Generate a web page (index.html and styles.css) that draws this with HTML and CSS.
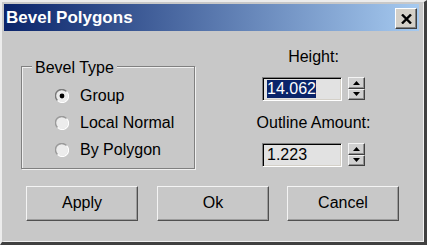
FILE: index.html
```html
<!DOCTYPE html>
<html>
<head>
<meta charset="utf-8">
<link rel="stylesheet" href="styles.css">
</head>
<body>
<div class="window">
  <div class="frame">
    <div class="titlebar">
      <span class="title">Bevel Polygons</span>
      <button class="close" type="button">
        <svg width="11" height="10" viewBox="0 0 11 10"><path d="M1 0.5 L10 9.5 M10 0.5 L1 9.5" stroke="#000" stroke-width="2.4" fill="none"/></svg>
      </button>
    </div>
    <div class="client">
      <div class="top">
        <div class="group">
          <span class="legend">Bevel Type</span>
          <div class="radio-row">
            <svg class="radio" width="14" height="14" viewBox="0 0 14 14">
              <circle cx="7" cy="7" r="6" fill="#ececec"/>
              <path d="M2.3 11.2 A6 6 0 0 1 11.2 2.3" stroke="#7a7a7a" stroke-width="1.4" fill="none"/>
              <path d="M11.7 2.8 A6 6 0 0 1 2.8 11.7" stroke="#ffffff" stroke-width="1.2" fill="none"/>
              <circle cx="7" cy="7" r="2.4" fill="#000"/>
            </svg>
            <span>Group</span>
          </div>
          <div class="radio-row">
            <svg class="radio" width="14" height="14" viewBox="0 0 14 14">
              <circle cx="7" cy="7" r="6" fill="#ececec"/>
              <path d="M2.3 11.2 A6 6 0 0 1 11.2 2.3" stroke="#9a9a9a" stroke-width="1.4" fill="none"/>
              <path d="M11.7 2.8 A6 6 0 0 1 2.8 11.7" stroke="#ffffff" stroke-width="1.2" fill="none"/>
            </svg>
            <span>Local Normal</span>
          </div>
          <div class="radio-row">
            <svg class="radio" width="14" height="14" viewBox="0 0 14 14">
              <circle cx="7" cy="7" r="6" fill="#ececec"/>
              <path d="M2.3 11.2 A6 6 0 0 1 11.2 2.3" stroke="#9a9a9a" stroke-width="1.4" fill="none"/>
              <path d="M11.7 2.8 A6 6 0 0 1 2.8 11.7" stroke="#ffffff" stroke-width="1.2" fill="none"/>
            </svg>
            <span>By Polygon</span>
          </div>
        </div>
        <div class="params">
          <div class="label">Height:</div>
          <div class="field">
            <div class="input"><span class="sel">14.062</span></div>
            <div class="spin">
              <div class="spin-btn"><svg width="7" height="4" viewBox="0 0 7 4"><path d="M3.5 0 L7 4 L0 4 Z" fill="#000"/></svg></div>
              <div class="spin-btn"><svg width="7" height="4" viewBox="0 0 7 4"><path d="M0 0 L7 0 L3.5 4 Z" fill="#000"/></svg></div>
            </div>
          </div>
          <div class="label label2">Outline Amount:</div>
          <div class="field">
            <div class="input"><span class="val">1.223</span></div>
            <div class="spin">
              <div class="spin-btn"><svg width="7" height="4" viewBox="0 0 7 4"><path d="M3.5 0 L7 4 L0 4 Z" fill="#000"/></svg></div>
              <div class="spin-btn"><svg width="7" height="4" viewBox="0 0 7 4"><path d="M0 0 L7 0 L3.5 4 Z" fill="#000"/></svg></div>
            </div>
          </div>
        </div>
      </div>
      <div class="buttons">
        <button class="btn btn-apply" type="button">Apply</button>
        <button class="btn" type="button">Ok</button>
        <button class="btn" type="button">Cancel</button>
      </div>
    </div>
  </div>
</div>
</body>
</html>
```

FILE: styles.css
```css
body {
  margin: 0;
  font-family: "Liberation Sans", Arial, sans-serif;
  font-size: 16px;
  color: #000;
}

.window {
  width: 427px;
  height: 245px;
  box-sizing: border-box;
  border-style: solid;
  border-width: 2px 3px 3px 2px;
  border-color: #ececec #404040 #404040 #ececec;
  background: #c8c8c8;
}

.frame {
  height: 100%;
  box-sizing: border-box;
  border-style: solid;
  border-width: 2px 1px 1px 2px;
  border-color: #c8c8c8 #f0f0f0 #f0f0f0 #c8c8c8;
  padding-right: 4px;
  display: flex;
  flex-direction: column;
}

.titlebar {
  height: 27px;
  flex: none;
  display: flex;
  align-items: flex-start;
  background: linear-gradient(to right, #0a246a, #a6caf0);
}

.title {
  color: #fff;
  font-weight: bold;
  font-size: 17px;
  line-height: 27px;
  padding-left: 2px;
}

.close {
  margin: 4px 2px 0 auto;
  width: 22px;
  height: 21px;
  box-sizing: border-box;
  padding: 0;
  border: 1px solid;
  border-color: #ffffff #404040 #404040 #ffffff;
  box-shadow: inset -1px -1px 0 #808080;
  background: #d4d0c8;
  display: flex;
  align-items: center;
  justify-content: center;
}

.client {
  flex: 1;
  display: flex;
  flex-direction: column;
}

.top {
  display: flex;
  align-items: flex-start;
}

.group {
  position: relative;
  margin-left: 17px;
  margin-top: 35px;
  width: 174px;
  height: 103px;
  box-sizing: border-box;
  border: 1px solid #808080;
  box-shadow: 1px 1px 0 #f0f0f0, inset 1px 1px 0 #f0f0f0;
  padding-top: 15px;
  padding-left: 33px;
}

.legend {
  position: absolute;
  top: -8px;
  left: 10px;
  padding: 0 3px;
  background: #c8c8c8;
  line-height: 18px;
}

.radio-row {
  display: flex;
  align-items: center;
  height: 27px;
  gap: 11px;
  line-height: 27px;
}

.radio {
  flex: none;
}

.params {
  margin-left: 55px;
  width: 127px;
  padding-top: 17px;
  display: flex;
  flex-direction: column;
  align-items: center;
}

.label {
  line-height: 18px;
  white-space: nowrap;
}

.label2 {
  margin-top: 13px;
}

.field {
  margin-top: 11px;
  display: flex;
  align-items: flex-start;
  gap: 6px;
}

.input {
  width: 80px;
  height: 24px;
  box-sizing: border-box;
  border: 1px solid;
  border-color: #808080 #ffffff #ffffff #808080;
  box-shadow: inset 1px 1px 0 #000, inset -1px -1px 0 #d4d0c8;
  background: #e2e2e2;
  padding: 2px 0 0 4px;
}

.sel {
  display: inline-block;
  background: #0a246a;
  color: #fff;
  line-height: 18px;
  vertical-align: top;
}

.val {
  display: inline-block;
  line-height: 18px;
  vertical-align: top;
}

.spin {
  width: 17px;
  height: 23px;
  display: flex;
  flex-direction: column;
}

.spin-btn {
  flex: 1;
  box-sizing: border-box;
  border: 1px solid;
  border-color: #f4f4f4 #404040 #404040 #f4f4f4;
  box-shadow: inset -1px -1px 0 #909090;
  background: #d0d0d0;
  display: flex;
  align-items: center;
  justify-content: center;
}

.buttons {
  margin-top: 17px;
  padding-left: 22px;
  display: flex;
  gap: 18px;
}

.btn {
  width: 112px;
  height: 35px;
  box-sizing: border-box;
  padding: 0 0 2px 0;
  border: 1px solid;
  border-color: #f4f4f4 #505050 #505050 #f4f4f4;
  box-shadow: inset -1px -1px 0 #9c9c9c;
  background: #c8c8c8;
  font-family: "Liberation Sans", Arial, sans-serif;
  font-size: 16px;
  color: #000;
}

.btn-apply {
  margin-right: 1px;
}
```
